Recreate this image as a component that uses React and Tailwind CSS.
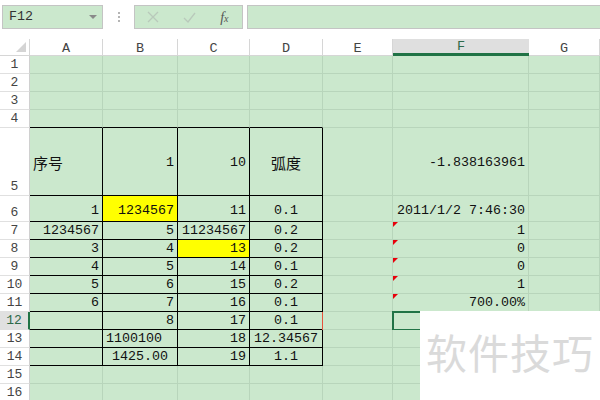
import React from "react";

const MONO = { fontFamily: '"Liberation Mono", "Noto Sans CJK SC", monospace' };
const CJK = { fontFamily: '"Noto Sans CJK SC", sans-serif' };

const R = (t, o = {}) => ({ t, a: "r", ...o });
const L = (t, o = {}) => ({ t, a: "l", ...o });
const C = (t, o = {}) => ({ t, a: "c", ...o });

const rows = [
  { n: 1, h: "h-[18px]", cells: {} },
  { n: 2, h: "h-[18px]", cells: {} },
  { n: 3, h: "h-[18px]", cells: {} },
  { n: 4, h: "h-[18px]", cells: {} },
  {
    n: 5,
    h: "h-[68px]",
    mid: true,
    cells: {
      A: L("序号", { cjk: true }),
      B: R("1"),
      C: R("10"),
      D: C("弧度", { cjk: true }),
      F: R("-1.838163961"),
    },
  },
  {
    n: 6,
    h: "h-[26px]",
    pb: true,
    cells: {
      A: R("1"),
      B: R("1234567", { y: true }),
      C: R("11"),
      D: C("0.1"),
      F: R("2011/1/2 7:46:30"),
    },
  },
  { n: 7, h: "h-[18px]", cells: { A: R("1234567"), B: R("5"), C: R("11234567"), D: C("0.2"), F: R("1", { tri: true }) } },
  { n: 8, h: "h-[18px]", cells: { A: R("3"), B: R("4"), C: R("13", { y: true }), D: C("0.2"), F: R("0", { tri: true }) } },
  { n: 9, h: "h-[18px]", cells: { A: R("4"), B: R("5"), C: R("14"), D: C("0.1"), F: R("0", { tri: true }) } },
  { n: 10, h: "h-[18px]", cells: { A: R("5"), B: R("6"), C: R("15"), D: C("0.2"), F: R("1", { tri: true }) } },
  { n: 11, h: "h-[18px]", cells: { A: R("6"), B: R("7"), C: R("16"), D: C("0.1"), F: R("700.00%", { tri: true }) } },
  { n: 12, h: "h-[18px]", sel: true, cells: { B: R("8"), C: R("17"), D: C("0.1", { red: true }), F: { t: "", a: "r", cur: true } } },
  { n: 13, h: "h-[18px]", cells: { B: L("1100100"), C: R("18"), D: C("12.34567") } },
  { n: 14, h: "h-[18px]", cells: { B: C("1425.00"), C: R("19"), D: C("1.1") } },
  { n: 15, h: "h-[18px]", cells: {} },
  { n: 16, h: "h-[18px]", cells: {} },
];

const cols = ["A", "B", "C", "D", "E", "F", "G"];
const tableCols = ["A", "B", "C", "D"];

function Cell({ row, col }) {
  const spec = row.cells[col];
  const inTable = row.n >= 5 && row.n <= 14 && tableCols.includes(col);
  const aboveTable = row.n === 4 && tableCols.includes(col);
  const rightCls = inTable ? "border-r-black" : "border-r-[#b8d5bb]";
  const bottomCls = inTable || aboveTable ? "border-b-black" : "border-b-[#b8d5bb]";
  const bg = spec && spec.y ? "bg-[#ffff00]" : "bg-[#cbe8cd]";
  const align = !spec ? "" : spec.a === "r" ? "justify-end" : spec.a === "c" ? "justify-center" : "justify-start";
  const v = row.mid ? "items-center pt-[2px]" : "items-end";
  return (
    <div
      className={`relative flex ${v} ${align} ${bg} border-r border-b ${rightCls} ${bottomCls} px-[3px] ${row.pb ? "pb-[2px]" : ""} overflow-visible whitespace-nowrap text-[13.33px] leading-[16px] text-[#111]`}
      style={spec && spec.cjk ? { ...CJK, fontSize: "15px" } : MONO}
    >
      {spec && spec.t}
      {spec && spec.tri && (
        <div className="absolute left-0 top-0 w-0 h-0 border-t-[5px] border-r-[5px] border-t-[#e8000b] border-r-transparent" />
      )}
      {spec && spec.red && <div className="absolute right-[-2px] top-0 bottom-[-1px] w-[2px] bg-[#e5533d]" />}
      {spec && spec.cur && (
        <div className="absolute left-[-1px] top-[-1px] w-[140px] h-[20px] border-2 border-[#217346]" />
      )}
    </div>
  );
}

export default function App() {
  return (
    <div className="relative w-[600px] h-[400px] overflow-hidden bg-white">
      {/* formula bar */}
      <div className="h-[39px] flex items-start pt-[5px] pl-[2px]">
        <div className="w-[101px] h-[24px] border border-[#c4c4c4] bg-[#cbe8cd] flex items-center justify-between pl-[6px] pr-[5px]">
          <span className="text-[13.33px] text-[#333]" style={MONO}>F12</span>
          <div className="w-0 h-0 border-l-[4px] border-r-[4px] border-t-[4px] border-l-transparent border-r-transparent border-t-[#8a8a8a]" />
        </div>
        <div className="w-[31px] h-[24px] flex flex-col items-center justify-center gap-[2px]">
          <div className="w-[2px] h-[2px] bg-[#b5b5b5]" />
          <div className="w-[2px] h-[2px] bg-[#b5b5b5]" />
          <div className="w-[2px] h-[2px] bg-[#b5b5b5]" />
        </div>
        <div className="w-[109px] h-[24px] border border-[#c4c4c4] bg-[#cbe8cd] flex items-center">
          <div className="w-[37px] flex justify-center">
            <svg width="12" height="12" viewBox="0 0 12 12">
              <path d="M1 1 L11 11 M11 1 L1 11" stroke="#b9c9bb" strokeWidth="1.3" fill="none" />
            </svg>
          </div>
          <div className="w-[36px] flex justify-center">
            <svg width="13" height="11" viewBox="0 0 13 11">
              <path d="M1 6 L5 10 L12 1" stroke="#b9c9bb" strokeWidth="1.3" fill="none" />
            </svg>
          </div>
          <div className="w-[36px] flex justify-center">
            <span className="italic text-[14px] text-[#555]" style={{ fontFamily: '"Liberation Serif", serif' }}>
              f<span className="text-[10px]">x</span>
            </span>
          </div>
        </div>
        <div className="ml-[4px] flex-1 h-[24px] border border-[#c4c4c4] border-r-0 bg-[#cbe8cd]" />
      </div>

      {/* sheet */}
      <div className="grid grid-cols-[30px_73px_75px_72px_73px_70px_136px_71px]">
        <div className="h-[17px] relative bg-white border-r border-b border-[#d6d6d6]">
          <div className="absolute right-[3px] bottom-[3px] w-0 h-0 border-l-[10px] border-b-[10px] border-l-transparent border-b-[#d4d4d4]" />
        </div>
        {cols.map((c) =>
          c === "F" ? (
            <div
              key={c}
              className="h-[17px] flex items-center justify-center pt-[2px] bg-[#dfdfdf] border-b-[3px] border-[#217346] text-[13.5px] text-[#2d6a4a] leading-none"
              style={MONO}
            >
              {c}
            </div>
          ) : (
            <div
              key={c}
              className="h-[17px] flex items-center justify-center pt-[3px] bg-white border-r border-b border-[#d6d6d6] text-[13.5px] text-[#444] leading-none"
              style={MONO}
            >
              {c}
            </div>
          )
        )}
        {rows.map((row) => (
          <React.Fragment key={row.n}>
            <div
              className={`${row.h} flex items-end justify-center ${
                row.sel ? "bg-[#e0e0e0] border-r-2 border-r-[#217346] text-[#2d6a4a]" : "bg-white border-r border-r-[#d0d0d0] text-[#444]"
              } border-b border-b-[#e0e0e0] text-[13px] leading-[16px]`}
              style={MONO}
            >
              {row.n}
            </div>
            {cols.map((c) => (
              <Cell key={c} row={row} col={c} />
            ))}
          </React.Fragment>
        ))}
      </div>

      {/* watermark panel */}
      <div className="absolute left-[420px] top-[311px] w-[180px] h-[89px] bg-white pl-[6px] pt-[20px]">
        <span className="text-[41px] leading-[41px] tracking-[1px] text-[#dadada]" style={CJK}>
          软件技巧
        </span>
      </div>
    </div>
  );
}
